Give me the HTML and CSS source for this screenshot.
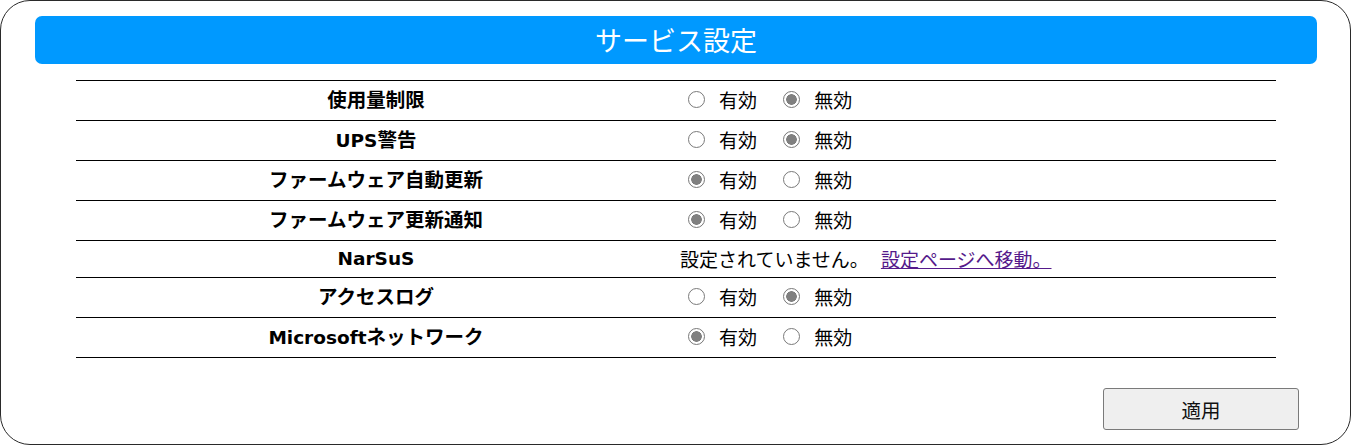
FILE: index.html
```html
<!DOCTYPE html>
<html lang="ja">
<head>
<meta charset="utf-8">
<title>サービス設定</title>
<link rel="stylesheet" href="styles.css">
</head>
<body>
<div class="panel">
  <div class="header">サービス設定</div>
  <table class="settings">
    <tr>
      <th>使用量制限</th>
      <td>
        <label class="opt"><input type="radio" name="r1"><span>有効</span></label>
        <label class="opt"><input type="radio" name="r1" checked><span>無効</span></label>
      </td>
    </tr>
    <tr>
      <th><span class="lat">UPS</span>警告</th>
      <td>
        <label class="opt"><input type="radio" name="r2"><span>有効</span></label>
        <label class="opt"><input type="radio" name="r2" checked><span>無効</span></label>
      </td>
    </tr>
    <tr>
      <th>ファームウェア自動更新</th>
      <td>
        <label class="opt"><input type="radio" name="r3" checked><span>有効</span></label>
        <label class="opt"><input type="radio" name="r3"><span>無効</span></label>
      </td>
    </tr>
    <tr>
      <th>ファームウェア更新通知</th>
      <td>
        <label class="opt"><input type="radio" name="r4" checked><span>有効</span></label>
        <label class="opt"><input type="radio" name="r4"><span>無効</span></label>
      </td>
    </tr>
    <tr class="short">
      <th><span class="lat">NarSuS</span></th>
      <td><span class="note">設定されていません。</span><a class="link" href="#">設定ページへ移動。</a></td>
    </tr>
    <tr>
      <th>アクセスログ</th>
      <td>
        <label class="opt"><input type="radio" name="r6"><span>有効</span></label>
        <label class="opt"><input type="radio" name="r6" checked><span>無効</span></label>
      </td>
    </tr>
    <tr>
      <th><span class="lat">Microsoft</span>ネットワーク</th>
      <td>
        <label class="opt"><input type="radio" name="r7" checked><span>有効</span></label>
        <label class="opt"><input type="radio" name="r7"><span>無効</span></label>
      </td>
    </tr>
  </table>
  <div class="actions">
    <button class="apply" type="button">適用</button>
  </div>
</div>
</body>
</html>
```

FILE: styles.css
```css
html, body {
  margin: 0;
  padding: 0;
  background: #ffffff;
}

body {
  font-family: "DejaVu Sans", "Noto Sans CJK JP", sans-serif;
  color: #000;
}

.panel {
  box-sizing: border-box;
  width: 1351px;
  height: 445px;
  border: 1px solid #2a2a2a;
  border-radius: 30px;
  padding: 15px 33px 0 34px;
}

.header {
  height: 48px;
  background: #0099ff;
  border-radius: 7px;
  color: #ffffff;
  font-family: "Noto Sans CJK JP", sans-serif;
  font-size: 27px;
  line-height: 48px;
  text-align: center;
}

.settings {
  width: 1200px;
  margin: 16px 0 0 41px;
  border-collapse: collapse;
  table-layout: fixed;
}

.settings tr {
  border-top: 1px solid #000;
  border-bottom: 1px solid #000;
}

.settings th,
.settings td {
  height: 39px;
  padding: 0;
  vertical-align: middle;
  font-size: 19.5px;
  line-height: 24px;
}

.settings tr.short th,
.settings tr.short td {
  height: 36px;
}

.settings th {
  width: 600px;
  font-weight: bold;
  text-align: center;
}

.lat {
  font-size: 18.5px;
}

.settings td {
  padding-left: 4px;
  font-family: "Noto Sans CJK JP", sans-serif;
  font-size: 19px;
  white-space: nowrap;
}

.opt {
  display: inline-flex;
  align-items: center;
  margin-right: 14px;
  cursor: pointer;
}

.opt input {
  appearance: none;
  -webkit-appearance: none;
  box-sizing: border-box;
  width: 17px;
  height: 17px;
  margin: 0 14px 0 8px;
  border: 1px solid #7a7a7a;
  border-radius: 50%;
  background: #fff;
  position: relative;
  top: -1px;
}

.opt input:checked {
  border: 1.5px solid #777777;
  background: radial-gradient(circle, #808080 0 5px, #ffffff 5.6px);
}

.note {
  margin-right: 12px;
}

.link {
  color: #551a8b;
  text-decoration: underline;
}

.actions {
  display: flex;
  justify-content: flex-end;
  margin-top: 30px;
  padding-right: 18px;
}

.apply {
  box-sizing: border-box;
  width: 196px;
  height: 42px;
  background: #efefef;
  border: 1px solid #7a7a7a;
  border-radius: 3px;
  font-family: "Noto Sans CJK JP", sans-serif;
  font-size: 19.5px;
  color: #111;
  padding: 0;
}
```
